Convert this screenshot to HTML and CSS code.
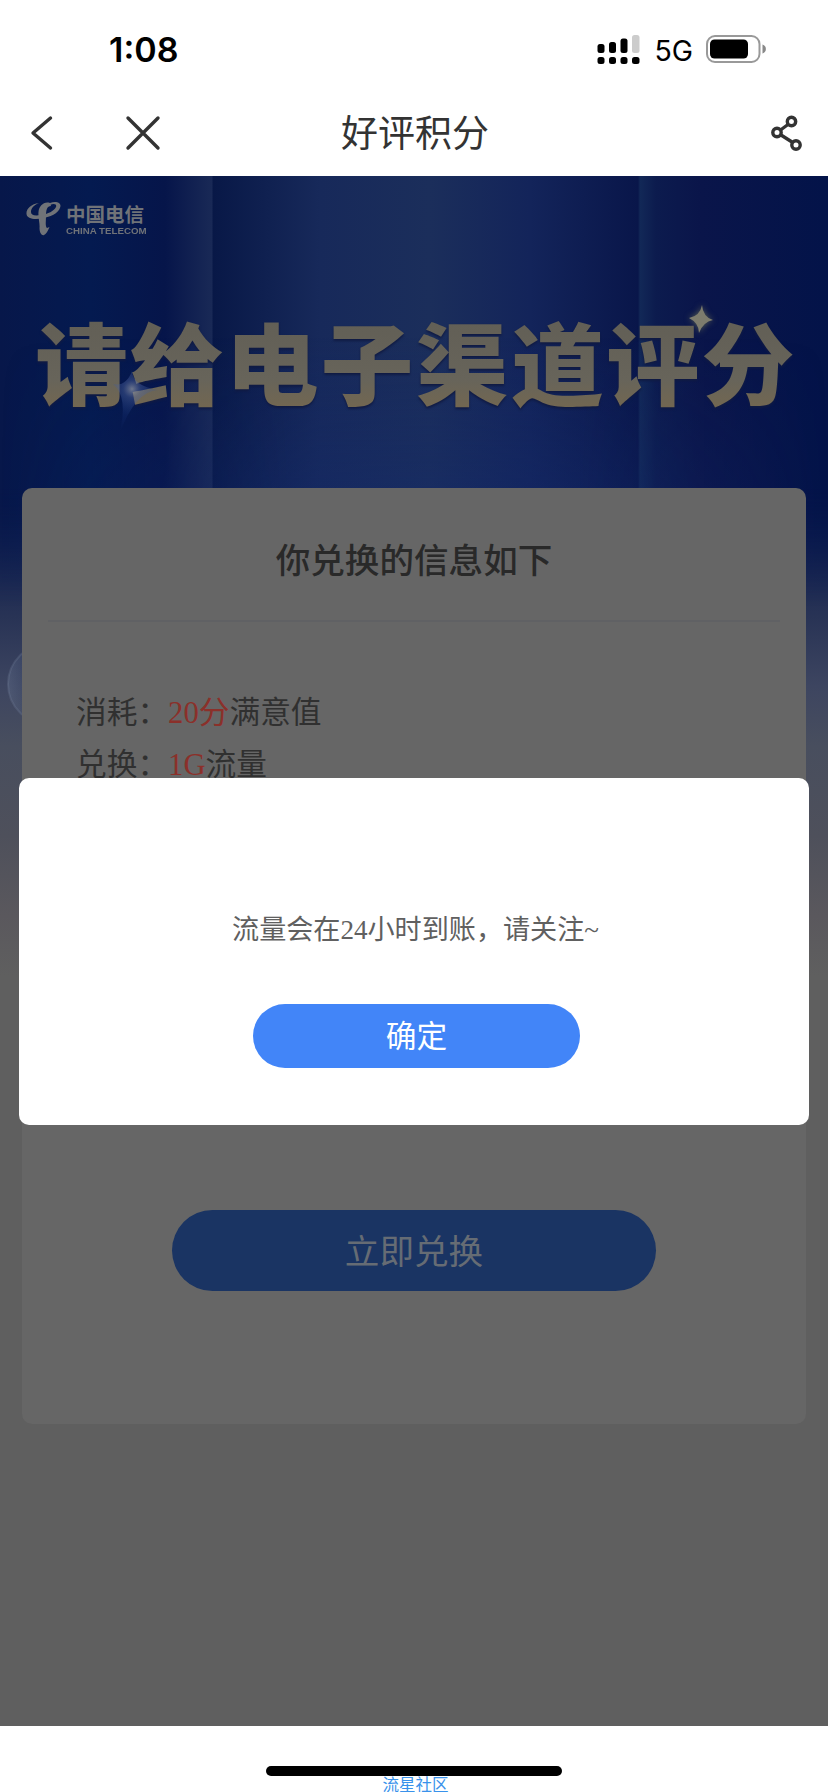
FILE: index.html
```html
<!DOCTYPE html>
<html lang="zh-CN">
<head>
<meta charset="UTF-8">
<title>好评积分</title>
<link rel="stylesheet" href="styles.css">
</head>
<body>
<div class="screen">
  <div class="status">
    <span class="time">1:08</span>
    <div class="indicators">
      <svg class="signal" width="43" height="30" viewBox="0 0 43 30">
        <rect x="0.5" y="9" width="7" height="9" rx="2.5"/><rect x="12" y="7" width="7" height="11" rx="2.5"/><rect x="23.5" y="3.5" width="7" height="14.5" rx="2.5"/><rect x="35" y="0" width="7.5" height="18" rx="2.5" fill="#ccc"/>
        <rect x="0.5" y="22" width="7" height="7" rx="2.5"/><rect x="12" y="22" width="7" height="7" rx="2.5"/><rect x="23.5" y="22" width="7" height="7" rx="2.5"/><rect x="35" y="22" width="7.5" height="7" rx="2.5"/>
      </svg>
      <span class="network">5G</span>
      <svg class="battery" width="61" height="28" viewBox="0 0 61 28">
        <rect x="1" y="1" width="52.5" height="26" rx="8" fill="none" stroke="#999" stroke-width="2"/>
        <rect x="4" y="4.5" width="38" height="19" rx="4.5"/>
        <path d="M56.5 9.500C61 11 61 17 56.500 18.500Z" fill="#888"/>
      </svg>
    </div>
  </div>
  <header class="nav">
    <div class="nav-left">
      <svg width="24" height="36" viewBox="0 0 24 36"><path d="M20.500 3L3 18L20.500 33" class="line"/></svg>
      <svg width="36" height="36" viewBox="0 0 36 36"><path d="M3 3L33 33M33 3L3 33" class="line"/></svg>
    </div>
    <h1 class="nav-title">好评积分</h1>
    <svg class="share" width="32" height="36" viewBox="0 0 32 36">
      <path d="M9.500 15L17 9.500M10 20L21 27" class="link"/>
      <circle cx="6" cy="17.500" r="4.200" class="link"/><circle cx="20.500" cy="6.500" r="4.200" class="link"/><circle cx="25" cy="30" r="4.200" class="link"/>
    </svg>
  </header>
  <main class="page">
    <div class="beams"></div>
    <svg class="bubble" width="22" height="104" viewBox="0 0 22 104"><defs><linearGradient id="b"><stop stop-color="#8da0bd" stop-opacity=".2"/><stop offset=".3" stop-color="#4c638f" stop-opacity=".08"/></linearGradient></defs><circle cx="48" cy="52" r="40" fill="url(#b)" stroke="#7f8da9" stroke-opacity=".22" stroke-width="2"/></svg>
    <div class="brand">
      <svg width="35" height="36" viewBox="0 0 35 36">
        <path d="M13 1C5 2 0 7 .5 12C1 17 9 18 18 16C28 14 34 9 34.500 4C34.500 0 29-1 24 1L24 3C28 1 31 2 30 5C28 9 22 12 15 13C8 14 5 13 5 10C5 6 8 3 13 1Z"/>
        <path d="M24 1C18-1 13 4 12.500 10C12 16 14 21 13.500 26C13.500 31 16 34 18 33C20 32 22 29 23.500 25L21 26C19 24 20 19 20 14C20 8 21 4 25 4Z"/>
      </svg>
      <div class="brand-text"><span class="brand-cn">中国电信</span><span class="brand-en">CHINA TELECOM</span></div>
    </div>
    <h2 class="headline">请给电子渠道评分</h2>
    <svg class="flare" width="70" height="80" viewBox="0 0 70 80"><defs><radialGradient id="f" gradientUnits="userSpaceOnUse" cx="35" cy="30" r="44"><stop stop-color="#a6a9ad" stop-opacity=".65"/><stop offset=".2" stop-color="#566ca5" stop-opacity=".4"/><stop offset=".6" stop-color="#26499a" stop-opacity="0.15"/><stop offset="1" stop-color="#26499a" stop-opacity="0"/></radialGradient></defs><path d="M16 25Q29 28 35 12Q36 27 61 31Q38 32 22 76Q32 38 16 25Z" fill="url(#f)"/></svg>
    <svg class="spark" width="24" height="28" viewBox="0 0 24 28"><path d="M13 0Q14 12 24 15Q14 17 10 28Q10 18 0 13Q11 11 13 0Z"/></svg>
    <section class="card">
      <h3 class="card-title">你兑换的信息如下</h3>
      <div class="details">
        <p>消耗：<em>20分</em>满意值</p>
        <p>兑换：<em>1G</em>流量</p>
      </div>
      <button class="redeem">立即兑换</button>
    </section>
    <div class="dialog" role="dialog">
      <p class="message">流量会在24小时到账，请关注~</p>
      <button class="confirm">确定</button>
    </div>
  </main>
  <footer class="bottom"><div class="home"></div><span class="credit">流星社区</span></footer>
</div>
</body>
</html>
```
FILE: styles.css
```css
* { box-sizing: border-box; }
body, h1, h2, h3, p { margin: 0; }
body { background: #fff; font-family: "Liberation Sans", "Noto Sans CJK SC", sans-serif; }
button { border: 0; padding: 0; display: block; font-family: "Noto Sans CJK SC", sans-serif; }
.screen { width: 828px; height: 1792px; overflow: hidden; display: flex; flex-direction: column; background: #fff; }
.status { height: 90px; padding: 5px 61px 0 109px; display: flex; justify-content: space-between; align-items: center; font-family: Inter, sans-serif; }
.time { font-size: 34px; font-weight: 600; line-height: 40px; margin-top: 5px; }
.indicators { display: flex; align-items: center; }
.network { font-size: 28.5px; line-height: 34px; margin: 7px 13px 0 14px; }
.signal { margin-top: 4px; }
.battery { margin-top: 3px; }
.nav { height: 86px; padding: 0 26px 0 30px; display: grid; grid-template-columns: 1fr auto 1fr; align-items: center; }
.nav-left { display: flex; gap: 71px; }
.line { fill: none; stroke: #333; stroke-width: 3.4; stroke-linecap: round; stroke-linejoin: round; }
.link { fill: none; stroke: #333; stroke-width: 3.4; }
.nav-title { font: 400 37px/54px "Noto Sans CJK SC", sans-serif; color: #333; padding: 0 2px 5px 0; }
.share { justify-self: end; margin-right: -1px; }
.page { position: relative; height: 1550px; padding: 25px 22px 0; background: linear-gradient(180deg, #04154a 0, #07184b 315px, #142352 370px, #283355 440px, #3d4560 510px, #484e5e 570px, #4e505b 660px, #5a585d 740px, #5f5f5f 800px); }
.beams { position: absolute; left: 0; top: 0; width: 828px; height: 460px; background: linear-gradient(90deg, #07174a 0, #041a50 90px, #06154a 165px, #192956 212px, #081847 213px, #17295a 320px, #1b2e5b 430px, #13245a 530px, #09164a 638px, #122857 640px, #0c1b4e 656px, #0a154a 700px, #031349 828px); -webkit-mask-image: linear-gradient(#000 310px, transparent 430px); mask-image: linear-gradient(#000 310px, transparent 430px); }
.beams::after { content: ""; position: absolute; inset: 0; background: linear-gradient(180deg, transparent 35%, rgba(20, 42, 108, .4) 70%); -webkit-mask-image: linear-gradient(90deg, transparent, #000 35%, #000 70%, transparent); mask-image: linear-gradient(90deg, transparent, #000 35%, #000 70%, transparent); }
.bubble { position: absolute; left: 0; top: 456px; }
.brand { position: relative; height: 36px; display: flex; gap: 5px; padding: 1px 0 0 4px; color: #707378; fill: #707378; }
.brand-text { display: flex; flex-direction: column; }
.brand-cn { font: 700 19.5px/24px "Noto Sans CJK SC", sans-serif; }
.brand-en { font: 700 9px/10px "Liberation Sans", sans-serif; transform: scaleX(1.08); transform-origin: left; }
.headline { position: relative; height: 110px; margin: 68px -5px 0 13px; width: 790px; font: 900 93px/110px "Noto Sans CJK SC", sans-serif; letter-spacing: 2.2px; white-space: nowrap; color: transparent; background: linear-gradient(#625f56 15px, #67645a 75px, #736750 108px); -webkit-background-clip: text; background-clip: text; transform: scaleY(.955); filter: drop-shadow(0 2px 1px #101a42); }
.flare { position: absolute; left: 97px; top: 183px; }
.spark { position: absolute; left: 689px; top: 129px; fill: #7d7c6d; filter: drop-shadow(0 0 3px #5c6250); }
.card { position: relative; height: 936px; margin-top: 73px; border-radius: 10px; background: #666; padding: 0 26px; color: #292929; }
.card-title { height: 134px; border-bottom: 2px solid #606164; padding-top: 44px; font: 500 34.6px/52px "Noto Sans CJK SC", sans-serif; text-align: center; }
.details { padding: 65px 28px 0; height: 588px; font: 30.7px/52px "Liberation Serif", "Noto Sans CJK SC", serif; color: #303030; }
.details em { font-style: normal; color: #8b302a; }
.redeem { margin: 0 auto; width: 484px; height: 81px; border-radius: 41px; background: #1a3463; color: #666c74; font-size: 34.6px; line-height: 78px; padding-bottom: 5px; }
.dialog { position: absolute; left: 19px; top: 601.500px; width: 790px; height: 347.500px; border-radius: 10px; background: #fff; padding-top: 133px; }
.message { height: 93px; text-align: center; color: #606060; font: 27.1px/38px "Liberation Serif", "Noto Sans CJK SC", serif; padding-left: 3px; }
.confirm { margin: 0 0 0 234px; width: 327px; height: 64px; border-radius: 32px; background: #4285f8; color: #fff; font-size: 30.7px; line-height: 60px; padding-bottom: 3px; }
.bottom { height: 66px; padding-top: 40px; display: flex; flex-direction: column; align-items: center; }
.home { width: 296px; height: 10px; border-radius: 5px; background: #000; }
.credit { color: #3992eb; font: 16.5px/16px "Noto Sans CJK SC", sans-serif; padding-left: 3px; }
```
